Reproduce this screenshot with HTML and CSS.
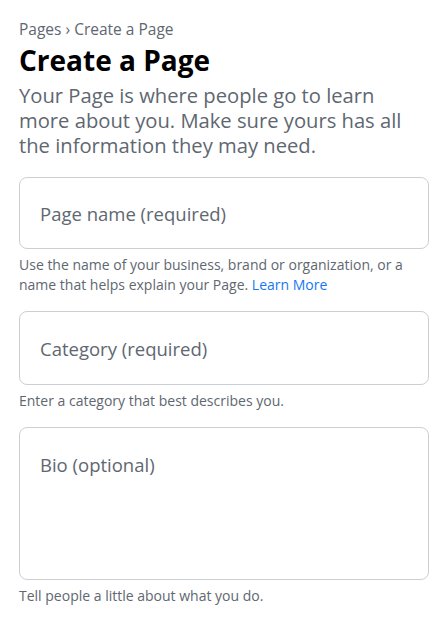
FILE: index.html
```html
<!DOCTYPE html>
<html lang="en">

<head>
    <meta charset="UTF-8">
    <meta name="viewport" content="width=device-width, initial-scale=1.0">
    <title>Create a Page</title>
    <link rel="stylesheet" href="styles.css">
</head>

<body>
    <div class="page">
        <div class="breadcrumb">Pages &rsaquo; Create a Page</div>
        <h1 class="title">Create a Page</h1>
        <p class="intro">Your Page is where people go to learn more about you. Make sure yours has all the information they may need.</p>

        <div class="field">
            <div class="input-box">Page name (required)</div>
            <p class="hint">Use the name of your business, brand or organization, or a name that helps explain your Page. <a href="#">Learn More</a></p>
        </div>

        <div class="field">
            <div class="input-box input-tall">Category (required)</div>
            <p class="hint">Enter a category that best describes you.</p>
        </div>

        <div class="field">
            <div class="input-box input-area">Bio (optional)</div>
            <p class="hint">Tell people a little about what you do.</p>
        </div>
    </div>
</body>

</html>
```

FILE: styles.css
```css
/* base */
body {
    margin: 0;
    font-family: "Open Sans", "Noto Sans", sans-serif;
    background-color: #fff;
    color: #606770;
}

.page {
    padding: 18px 10px 20px 19px;
}

.breadcrumb {
    font-size: 15.5px;
    line-height: 22px;
    color: #606770;
}

.title {
    margin: 2px 0 0;
    font-size: 28px;
    line-height: 36px;
    font-weight: 700;
    color: #000;
}

.intro {
    margin: 5px 0 19px;
    font-size: 20.2px;
    line-height: 25px;
    color: #606770;
}

/* fields */
.field {
    margin-bottom: 16px;
}

.input-box {
    box-sizing: border-box;
    height: 72px;
    border: 1px solid #ccd0d5;
    border-radius: 8px;
    padding: 0 20px;
    display: flex;
    align-items: center;
    font-size: 18.5px;
    color: #606770;
}

.input-tall {
    height: 74px;
}

.input-area {
    height: 153px;
    align-items: flex-start;
    padding-top: 24px;
}

.hint {
    margin: 6px 0 0;
    font-size: 14px;
    line-height: 20px;
    color: #606770;
}

.hint a {
    color: #1877f2;
    text-decoration: none;
}
```
